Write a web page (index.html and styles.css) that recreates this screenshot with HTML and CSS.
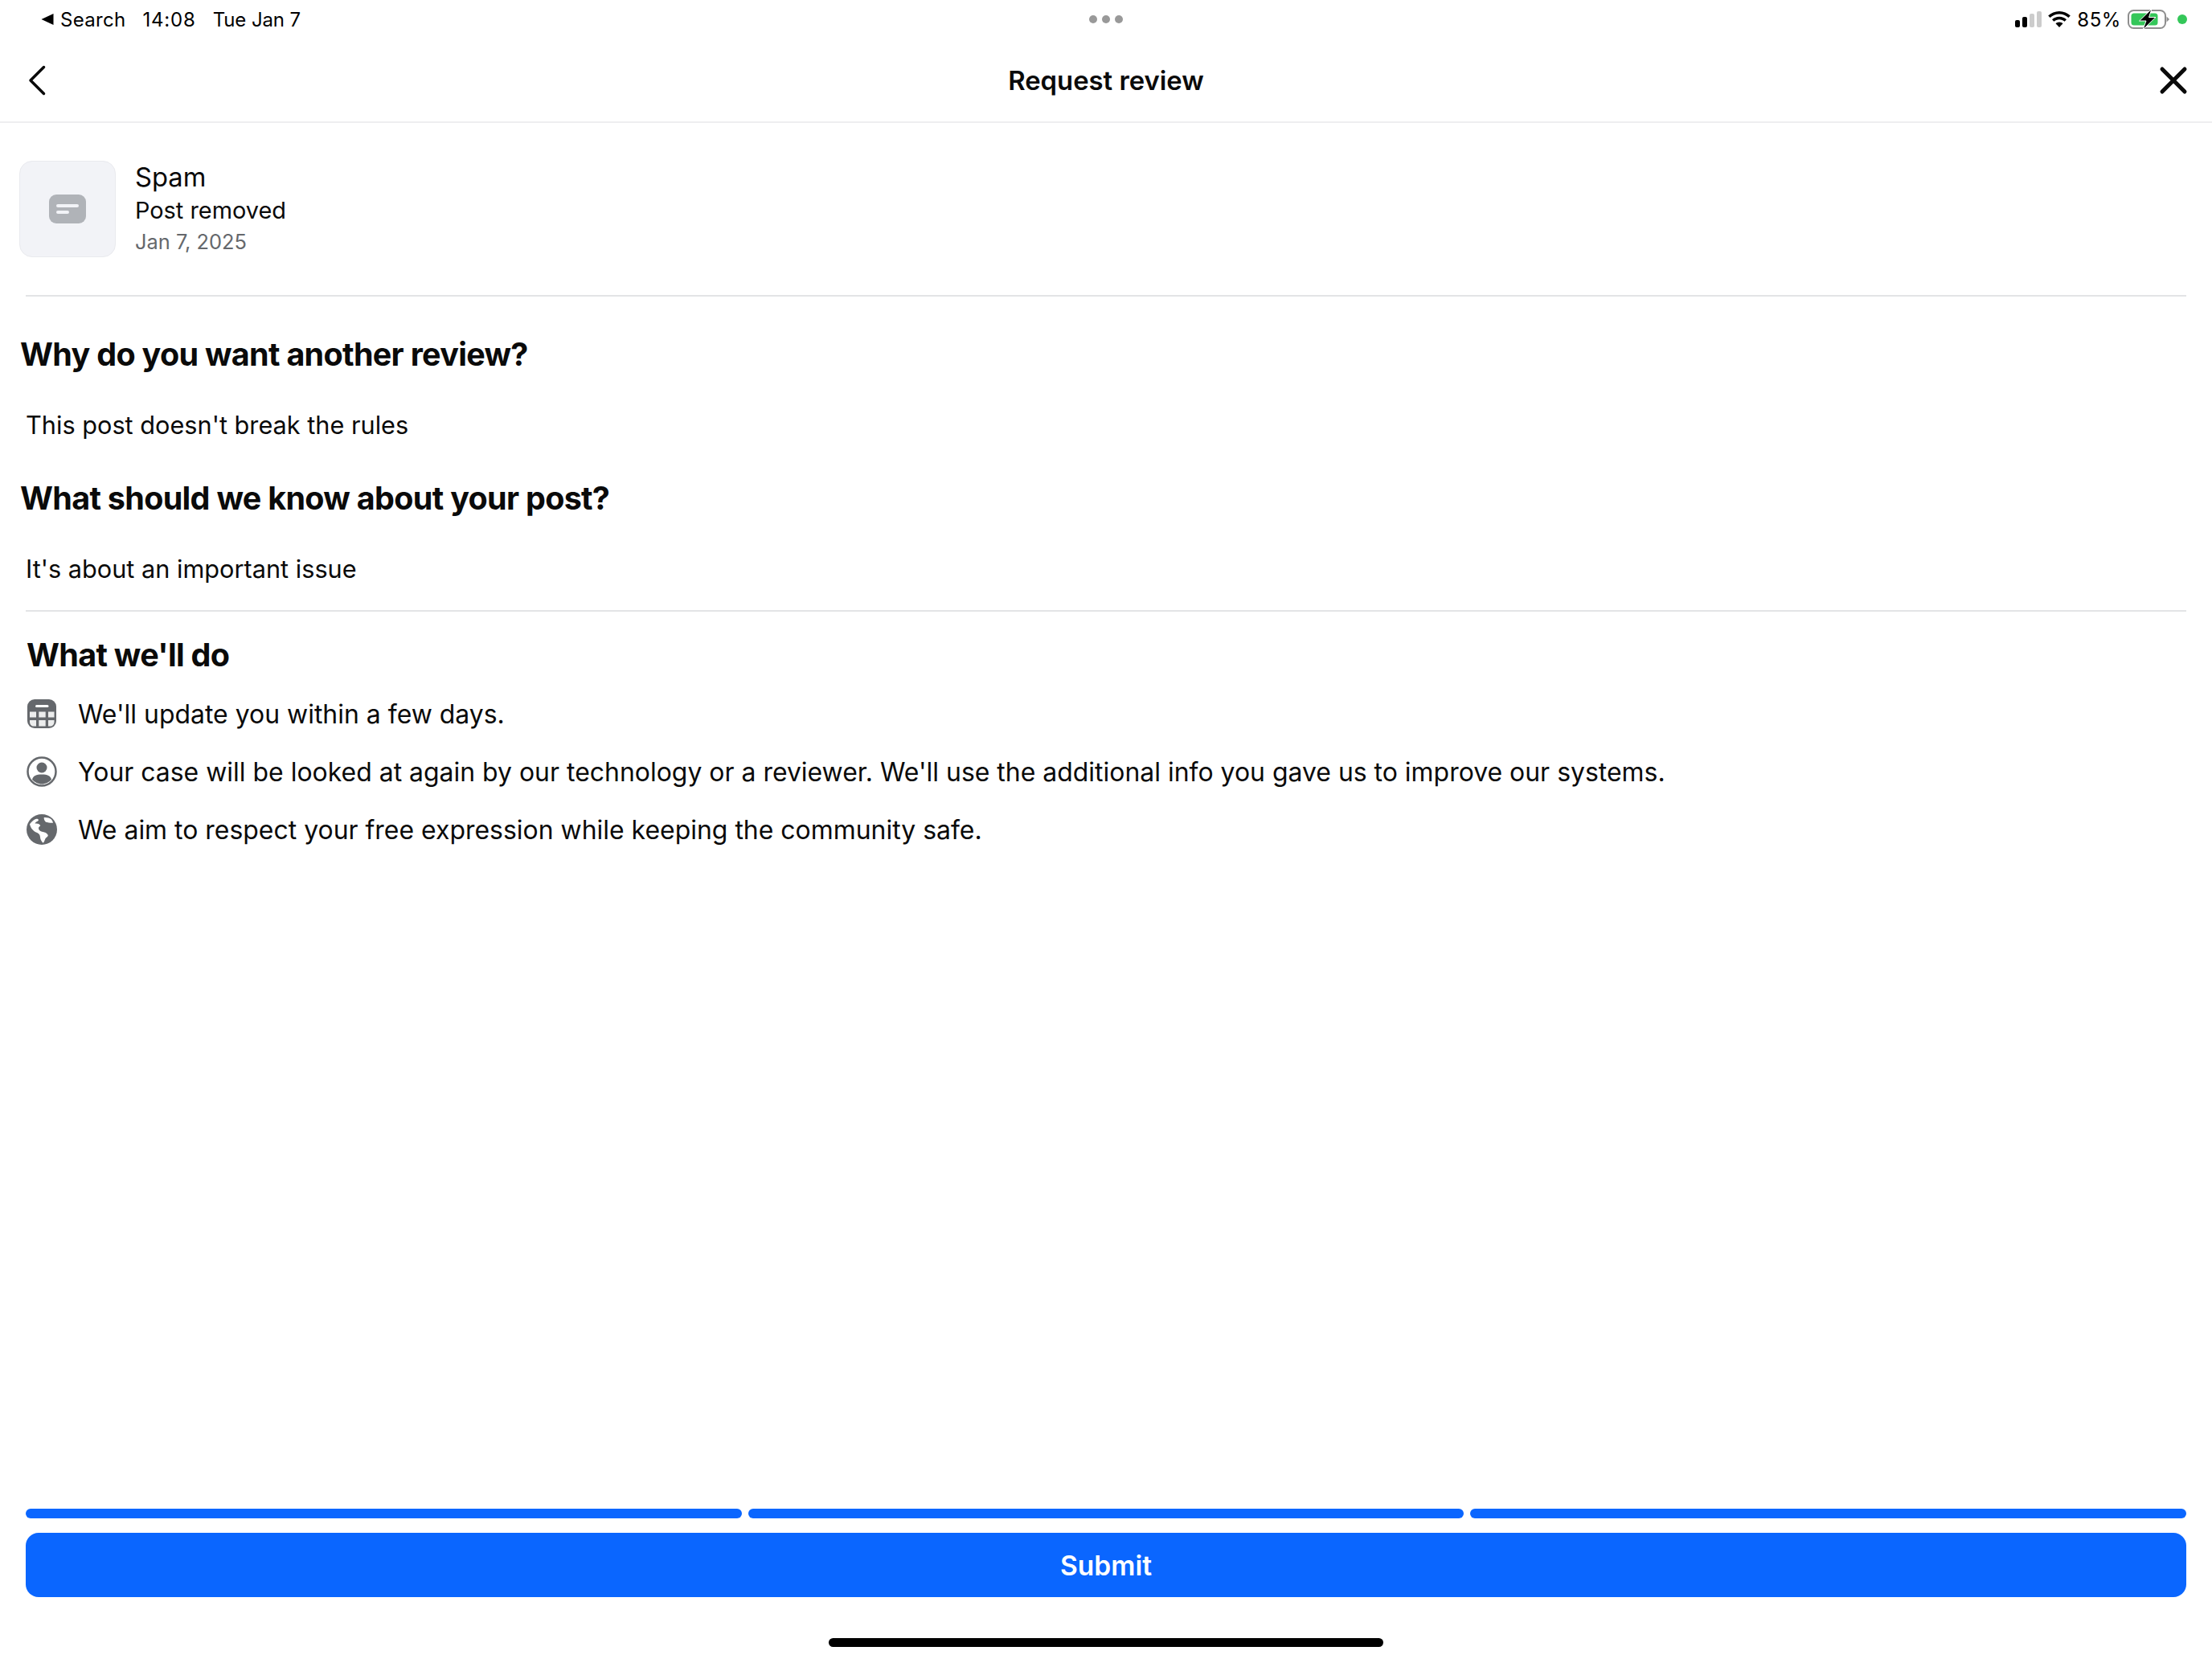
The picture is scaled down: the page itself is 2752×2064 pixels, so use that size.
FILE: index.html
```html
<!DOCTYPE html>
<html lang="en">
<head>
  <meta charset="UTF-8">
  <title>Request review</title>
  <link rel="stylesheet" href="styles.css">
</head>
<body>

  <!-- Status Bar -->
  <div class="status-bar">
    <div class="status-left">
      <span class="back-app"><svg class="back-tri" viewBox="0 0 16 16"><path d="M15.5 1v14L0.5 8z"/></svg><span class="search">Search</span></span>
      <span class="clock">14:08</span>
      <span class="date">Tue Jan 7</span>
    </div>
    <div class="multitask"><i></i><i></i><i></i></div>
    <div class="status-right">
      <svg class="signal" width="33" height="20" viewBox="0 0 33 20">
        <rect x="0" y="11" width="6" height="9" rx="2" fill="#000"/>
        <rect x="9" y="7" width="6" height="13" rx="2" fill="#000"/>
        <rect x="18" y="3" width="6" height="17" rx="2" fill="#ccc"/>
        <rect x="27" y="0" width="6" height="20" rx="2" fill="#ccc"/>
      </svg>
      <svg class="wifi" width="28" height="20" viewBox="0 0 28 20">
        <path d="M14 0C8.700 0 3.800 2.100 0.200 5.600l2.400 2.500C5.500 5.200 9.500 3.400 14 3.400s8.500 1.800 11.400 4.700l2.400-2.500C24.200 2.100 19.300 0 14 0z"/>
        <path d="M14 6.700c-3.500 0-6.700 1.400-9 3.600l2.400 2.500c1.700-1.600 4-2.600 6.600-2.600s4.900 1 6.600 2.600l2.400-2.500c-2.300-2.200-5.500-3.600-9-3.600z"/>
        <path d="M14 13.500c-1.800 0-3.400 0.700-4.500 1.800L14 20l4.500-4.700c-1.100-1.100-2.700-1.800-4.500-1.800z"/>
      </svg>
      <span class="percent">85%</span>
      <svg class="battery" width="52" height="26" viewBox="0 0 52 26">
        <rect x="1" y="2" width="46" height="22" rx="6.5" fill="#fff" stroke="#8e8e8e" stroke-width="2"/>
        <rect x="4.500" y="5.500" width="33" height="15" rx="3.500" fill="#34c759"/>
        <path d="M48.500 9.500l3.500 3.500-3.500 3.500z" fill="#8e8e8e"/>
        <path d="M30 0L14.500 15h8.500L19 26l16-15.500h-8.500z" fill="#000" stroke="#fff" stroke-width="1"/>
      </svg>
      <span class="dot-green"></span>
    </div>
  </div>

  <!-- Header -->
  <div class="top-nav">
    <svg class="nav-back" width="24" height="38" viewBox="0 0 24 38"><path d="M20.500 2.500L4 19l16.500 16.500"/></svg>
    <h1>Request review</h1>
    <svg class="nav-close" width="36" height="36" viewBox="0 0 36 36"><path d="M4 4l28 28M32 4L4 32"/></svg>
  </div>

  <!-- Removed post summary -->
  <div class="summary">
    <div class="thumb">
      <svg width="46" height="36" viewBox="0 0 46 36">
        <rect width="46" height="36" rx="9" fill="#b0b3b8"/>
        <rect x="9" y="12" width="28" height="4" rx="2" fill="#f2f3f7"/>
        <rect x="9" y="20" width="16" height="4" rx="2" fill="#f2f3f7"/>
      </svg>
    </div>
    <div class="summary-text">
      <div class="summary-title">Spam</div>
      <div class="summary-sub">Post removed</div>
      <div class="summary-date">Jan 7, 2025</div>
    </div>
  </div>

  <hr class="divider">

  <h2 class="question first">Why do you want another review?</h2>
  <p class="answer">This post doesn't break the rules</p>

  <h2 class="question">What should we know about your post?</h2>
  <p class="answer">It's about an important issue</p>

  <hr class="divider divider-gap">

  <!-- What we'll do -->
  <h2 class="todo-title">What we'll do</h2>
  <ul class="todo-list">
    <li>
      <svg width="38" height="38" viewBox="0 0 38 38">
        <rect x="1" y="1" width="36" height="36" rx="9" fill="#65686c"/>
        <rect x="11" y="8" width="16.500" height="3" rx="1.500" fill="#fff"/>
        <path d="M4 16.500h8v7H4zM15.300 16.500h8.400v7h-8.400zM27 16.500h7.500v7H27zM4 27h8v7.500H8.500C6 34.500 4 32 4 29zM15.300 27h8.400v7.500h-8.400zM27 27h7.500v2c0 3-2 5.500-4.500 5.500h-3z" fill="#eceded"/>
      </svg>
      <span>We'll update you within a few days.</span>
    </li>
    <li>
      <svg width="38" height="38" viewBox="0 0 38 38">
        <circle cx="19" cy="19" r="17.500" fill="#fff" stroke="#65686c" stroke-width="2.500"/>
        <circle cx="19" cy="14" r="6.500" fill="#65686c"/>
        <path d="M7 29c1-5 5-6.500 12-6.500S30 24 31 29c-3 3-7.500 5.500-12 5.500S10 32 7 29z" fill="#65686c"/>
      </svg>
      <span>Your case will be looked at again by our technology or a reviewer. We'll use the additional info you gave us to improve our systems.</span>
    </li>
    <li>
      <svg width="38" height="38" viewBox="0 0 38 38">
        <circle cx="19" cy="19" r="19" fill="#65686c"/>
        <path d="M4 12.300C6.500 9 9.500 6 12.300 5.700c1.500-.1 2.700.4 2.700 1.600-1 2-4 2-4.300 4.400 2.300-.5 5.300.3 6.600 2.300-.5 1.500-2.300 1.300-2.300 3.300 0 2.500 1.500 3.500 4.200 4.400 4.500.8 6.500 2 7.500 4.300.5 2-3 3-3.500 5-1 2.500-1.200 3.500-2.500 4.700-1.700-1.500-3.500-4-3.700-7-.2-3-1-4.500-4.500-6C8 21 5 17 4 12.300z" fill="#fff"/>
        <path d="M21.700 4c3-.3 7 .5 9 2.300 1 1 2 3 2.300 4.400-3 .2-7-.5-9-1-1.500-1.500-2.500-3-2.300-5.700z" fill="#fff"/>
      </svg>
      <span>We aim to respect your free expression while keeping the community safe.</span>
    </li>
  </ul>

  <!-- Bottom area -->
  <div class="bottom">
    <div class="progress"><span></span><span></span><span></span></div>
    <button class="submit-btn">Submit</button>
    <div class="home-bar"></div>
  </div>

</body>
</html>
```

FILE: styles.css
```css
/* General styling */
* {
  box-sizing: border-box;
}

body {
  display: flex;
  flex-direction: column;
  width: 2752px;
  height: 2064px;
  margin: 0;
  background-color: #fff;
  color: #0a0a0a;
  font-family: Inter, "Liberation Sans", sans-serif;
  overflow: hidden;
}

/* Status Bar */
.status-bar {
  display: grid;
  grid-template-columns: 1fr auto 1fr;
  align-items: center;
  height: 48px;
  padding: 0 31px;
  font-size: 24px;
  color: #000;
}

.status-left {
  display: flex;
  gap: 21px;
  padding-left: 20px;
}

.back-app {
  display: flex;
  align-items: center;
  gap: 8px;
}

.back-tri {
  width: 16px;
  height: 16px;
  fill: #000;
}

.search {
  letter-spacing: 0.3px;
}

.clock {
  letter-spacing: 0.8px;
}

.date {
  letter-spacing: -0.1px;
}

.multitask {
  display: flex;
  gap: 6px;
}

.multitask i {
  width: 10px;
  height: 10px;
  border-radius: 50%;
  background-color: #999;
}

.status-right {
  display: flex;
  align-items: center;
  justify-content: flex-end;
  gap: 8px;
}

.wifi {
  fill: #000;
}

.percent {
  letter-spacing: 0.6px;
}

.dot-green {
  width: 12px;
  height: 12px;
  margin-left: 2px;
  border-radius: 50%;
  background-color: #34c759;
}

/* Header */
.top-nav {
  display: grid;
  grid-template-columns: 1fr auto 1fr;
  align-items: center;
  height: 105px;
  padding: 0 32px;
  border-bottom: 2px solid #eeeef0;
}

.top-nav h1 {
  margin: 0;
  font-size: 32.8px;
  font-weight: 600;
  text-align: center;
}

.nav-back {
  margin-left: 2px;
}

.nav-close {
  justify-self: end;
  margin-right: -2px;
}

.nav-back path,
.nav-close path {
  fill: none;
  stroke: #0a0a0a;
  stroke-linecap: round;
  stroke-linejoin: round;
}

.nav-back path {
  stroke-width: 3.5;
}

.nav-close path {
  stroke-width: 5;
}

/* Removed post summary */
.summary {
  display: flex;
  align-items: center;
  gap: 24px;
  padding: 47px 24px;
}

.thumb {
  display: flex;
  align-items: center;
  justify-content: center;
  width: 120px;
  height: 120px;
  background-color: #f2f3f7;
  border: 1px solid #e9eaee;
  border-radius: 16px;
}

.summary-title {
  margin-top: -1px;
  font-size: 32.7px;
  line-height: 42px;
}

.summary-sub {
  margin-top: 1px;
  font-size: 28.9px;
  line-height: 40px;
}

.summary-date {
  font-size: 25.4px;
  line-height: 38px;
  color: #65686c;
}

.divider {
  width: 2688px;
  height: 2px;
  margin: 0 0 0 32px;
  border: 0;
  flex-shrink: 0;
  background-color: #e3e4e6;
}

.divider-gap {
  margin-top: 23px;
}

/* Questions */
.question {
  margin: 33px 0 0 25px;
  font-size: 39.5px;
  font-weight: 700;
  line-height: 60px;
  letter-spacing: -0.7px;
}

.question.first {
  margin-top: 42px;
}

.answer {
  margin: 30px 0 0 32px;
  font-size: 30.7px;
  line-height: 56px;
}

/* What we'll do */
.todo-title {
  margin: 25px 0 0 33px;
  font-size: 39.5px;
  font-weight: 700;
  line-height: 58px;
  letter-spacing: -0.7px;
}

.todo-list {
  margin: 0;
  padding: 8px 0 0 33px;
  list-style: none;
}

.todo-list li {
  display: flex;
  align-items: center;
  gap: 26px;
  height: 72px;
  font-size: 31.95px;
}

/* Bottom area */
.bottom {
  display: flex;
  flex-direction: column;
  align-items: center;
  margin-top: auto;
  padding: 0 32px 15px;
}

.progress {
  display: flex;
  gap: 8px;
  width: 100%;
}

.progress span {
  flex: 1;
  height: 12px;
  border-radius: 6px;
  background-color: #0a66ff;
}

.submit-btn {
  width: 100%;
  height: 80px;
  margin-top: 18px;
  padding-top: 3px;
  border: 0;
  border-radius: 16px;
  background-color: #0a66ff;
  color: #fff;
  font-family: inherit;
  font-size: 33.5px;
  font-weight: 600;
}

.home-bar {
  width: 690px;
  height: 11px;
  margin-top: 51px;
  border-radius: 6px;
  background-color: #000;
}
```
